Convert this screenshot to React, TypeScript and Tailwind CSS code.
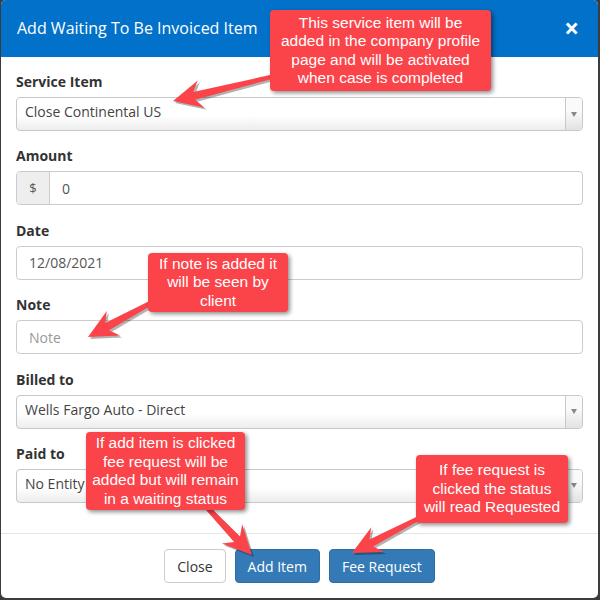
import React from "react";

type Pt = [number, number];

function arrowPoints(tail: Pt, tip: Pt, headLen = 29, headHalf = 14, neckHalf = 4, tailHalf = 2) {
  const dx = tip[0] - tail[0];
  const dy = tip[1] - tail[1];
  const len = Math.hypot(dx, dy);
  const ux = dx / len;
  const uy = dy / len;
  const nx = -uy;
  const ny = ux;
  const at = (d: number, s: number): string => {
    const x = tip[0] - ux * d + nx * s;
    const y = tip[1] - uy * d + ny * s;
    return `${x.toFixed(1)},${y.toFixed(1)}`;
  };
  const neck = headLen * 0.75;
  return [
    at(0, 0),
    at(headLen, headHalf),
    at(neck, neckHalf),
    at(len, tailHalf),
    at(len, -tailHalf),
    at(neck, -neckHalf),
    at(headLen, -headHalf),
  ].join(" ");
}

const arrows: { tail: Pt; tip: Pt }[] = [
  { tail: [275, 76], tip: [173, 101] },
  { tail: [160, 298], tip: [88, 337] },
  { tail: [200, 500], tip: [252, 555] },
  { tail: [425, 515], tip: [352, 553] },
];

function Label({ children }: { children: React.ReactNode }) {
  return <div className="text-[14px] font-bold text-[#333] leading-[20px] mb-[5px]">{children}</div>;
}

function Select({ value }: { value: string }) {
  return (
    <div className="h-[34px] flex border border-[#c8c8c8] rounded-[4px] bg-[linear-gradient(#ffffff_55%,#ededed)] overflow-hidden">
      <div className="flex-1 flex items-center pl-[8px] pb-[5px] text-[14px] text-[#444]">{value}</div>
      <div className="w-[17px] border-l border-[#c8c8c8] flex items-center justify-center bg-[linear-gradient(#fafafa_40%,#e2e2e2)]">
        <div className="w-0 h-0 border-l-[3.5px] border-r-[3.5px] border-t-[5px] border-l-transparent border-r-transparent border-t-[#888]" />
      </div>
    </div>
  );
}

function Input({ value, placeholder }: { value?: string; placeholder?: string }) {
  return (
    <div className="h-[34px] flex items-center border border-[#ccc] rounded-[4px] px-[12px] text-[14px]">
      {value ? <span className="text-[#555]">{value}</span> : <span className="text-[#999]">{placeholder}</span>}
    </div>
  );
}

function Callout({ className, children }: { className: string; children: React.ReactNode }) {
  return (
    <div
      className={`absolute bg-[#fb434a] rounded-[4px] text-white text-[15.5px] leading-[18.5px] text-center flex items-center justify-center shadow-[2px_2px_4px_rgba(0,0,0,0.45)] ${className}`}
      style={{ fontFamily: '"Liberation Sans", Arial, sans-serif' }}
    >
      <div>{children}</div>
    </div>
  );
}

export default function App() {
  return (
    <div
      className="relative w-[600px] h-[600px] bg-[#3c3c3c] overflow-hidden"
      style={{ fontFamily: '"Open Sans", "Noto Sans", sans-serif' }}
    >
      <div className="ml-[1px] w-[597px] h-[598px] bg-white rounded-[5px] overflow-hidden flex flex-col">
        <div className="h-[57px] shrink-0 bg-[#0271c9] px-[16px] flex items-center justify-between">
          <div className="text-white text-[16px] leading-[24px] -mt-[1px]">Add Waiting To Be Invoiced Item</div>
          <div className="text-white text-[26px] font-bold leading-none mr-[3px] -mt-[2px]">×</div>
        </div>
        <div className="flex-1 px-[15px] pt-[15px] flex flex-col gap-[15.4px]">
          <div>
            <Label>Service Item</Label>
            <Select value="Close Continental US" />
          </div>
          <div>
            <Label>Amount</Label>
            <div className="h-[34px] flex border border-[#ccc] rounded-[4px] overflow-hidden text-[14px]">
              <div className="w-[33px] bg-[#eee] border-r border-[#ccc] flex items-center justify-center text-[#555] text-[13px]">$</div>
              <div className="flex-1 flex items-center pl-[12px] text-[#555]">0</div>
            </div>
          </div>
          <div>
            <Label>Date</Label>
            <Input value="12/08/2021" />
          </div>
          <div>
            <Label>Note</Label>
            <Input placeholder="Note" />
          </div>
          <div>
            <Label>Billed to</Label>
            <Select value="Wells Fargo Auto - Direct" />
          </div>
          <div>
            <Label>Paid to</Label>
            <Select value="No Entity" />
          </div>
        </div>
        <div className="h-[65px] shrink-0 border-t border-[#e5e5e5] flex justify-center items-start pt-[15px] gap-[9px] text-[14px]">
          <div className="h-[34px] px-[12px] flex items-center border border-[#ccc] rounded-[4px] text-[#333] bg-white">Close</div>
          <div className="h-[34px] px-[12px] flex items-center border border-[#2e6da4] rounded-[4px] text-white bg-[#337ab7]">Add Item</div>
          <div className="h-[34px] px-[12px] flex items-center border border-[#2e6da4] rounded-[4px] text-white bg-[#337ab7]">Fee Request</div>
        </div>
      </div>

      <svg className="absolute inset-0" width="600" height="600" viewBox="0 0 600 600">
        {arrows.map((a, i) => (
          <g key={i}>
            <polygon points={arrowPoints([a.tail[0] + 2, a.tail[1] + 2], [a.tip[0] + 2, a.tip[1] + 2])} fill="rgba(0,0,0,0.3)" />
            <polygon points={arrowPoints(a.tail, a.tip)} fill="#fb434a" />
          </g>
        ))}
      </svg>

      <Callout className="left-[270px] top-[10px] w-[221px] h-[81px]">
        This service item will be<br />added in the company profile<br />page and will be activated<br />when case is completed
      </Callout>
      <Callout className="left-[148px] top-[253px] w-[140px] h-[59px]">
        If note is added it<br />will be seen by<br />client
      </Callout>
      <Callout className="left-[86px] top-[432px] w-[159px] h-[78px]">
        If add item is clicked<br />fee request will be<br />added but will remain<br />in a waiting status
      </Callout>
      <Callout className="left-[416px] top-[455px] w-[152px] h-[68px]">
        If fee request is<br />clicked the status<br />will read Requested
      </Callout>
    </div>
  );
}
